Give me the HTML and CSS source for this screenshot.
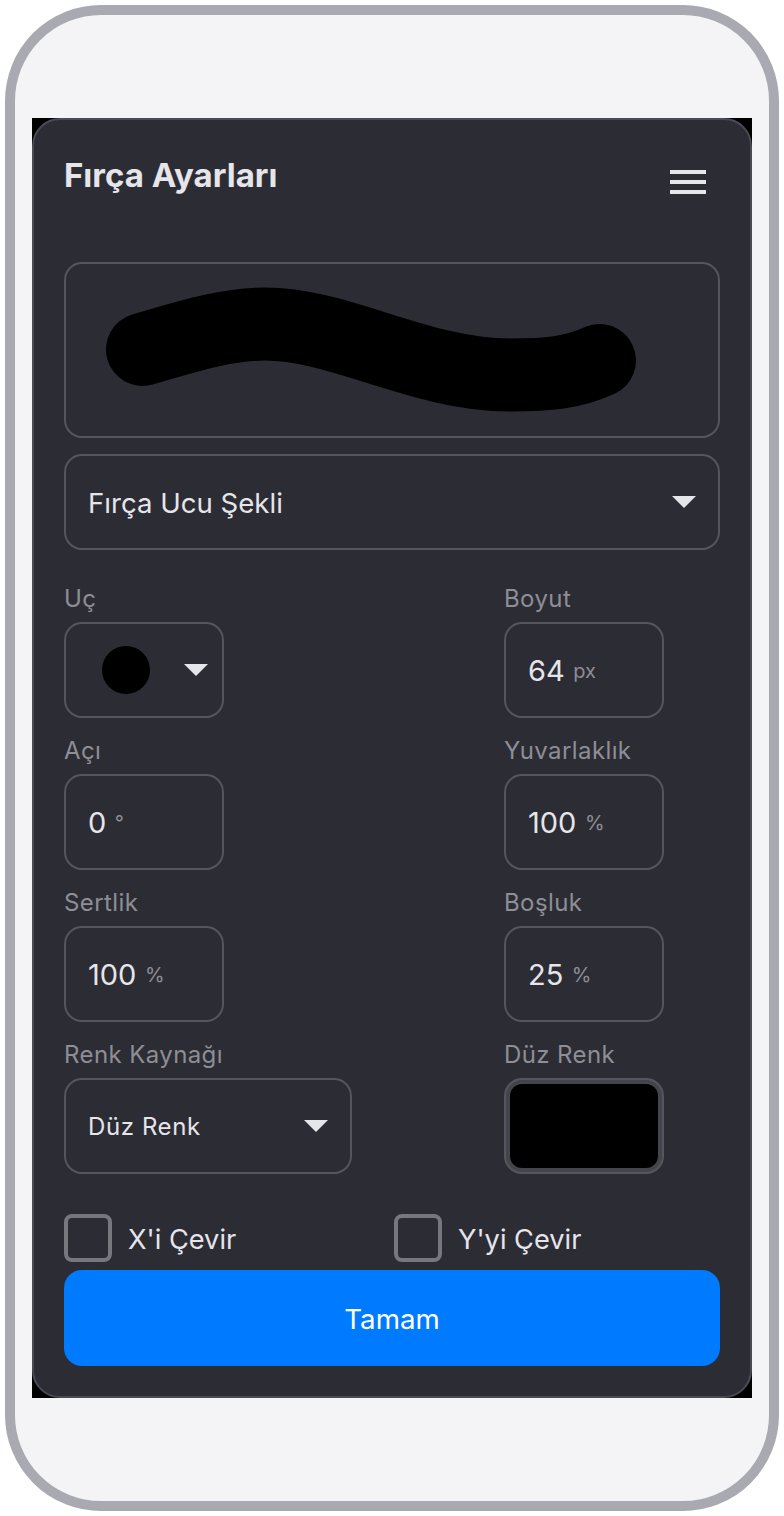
FILE: index.html
```html
<!DOCTYPE html>
<html lang="tr">
<head>
<meta charset="utf-8">
<title>Fırça Ayarları</title>
<link rel="stylesheet" href="styles.css">
</head>
<body>
<div class="phone">
  <div class="screen">
    <section class="modal">
      <header class="header">
        <h1 class="title">Fırça Ayarları</h1>
        <div class="menu"><span></span><span></span><span></span></div>
      </header>
      <div class="box preview">
        <svg class="stroke" viewBox="0 0 656 176" width="656" height="176">
          <path d="M78.500 87.500 C118 76 160 62 201 62 C276 62 356 113 446 113 C484 113 508 111 535.500 98.500" fill="none" stroke="#000" stroke-width="73" stroke-linecap="round"/>
        </svg>
      </div>
      <div class="box field select-wide"><span class="select-text">Fırça Ucu Şekli</span><i class="caret"></i></div>
      <div class="grid">
        <div class="cell">
          <div class="label">Uç</div>
          <div class="box field narrow tip"><span class="dot"></span><i class="caret"></i></div>
        </div>
        <div class="cell">
          <div class="label">Boyut</div>
          <div class="box field narrow"><span class="value">64</span><span class="unit">px</span></div>
        </div>
        <div class="cell">
          <div class="label">Açı</div>
          <div class="box field narrow"><span class="value">0</span><span class="unit">°</span></div>
        </div>
        <div class="cell">
          <div class="label">Yuvarlaklık</div>
          <div class="box field narrow"><span class="value">100</span><span class="unit">%</span></div>
        </div>
        <div class="cell">
          <div class="label">Sertlik</div>
          <div class="box field narrow"><span class="value">100</span><span class="unit">%</span></div>
        </div>
        <div class="cell">
          <div class="label">Boşluk</div>
          <div class="box field narrow"><span class="value">25</span><span class="unit">%</span></div>
        </div>
        <div class="cell">
          <div class="label">Renk Kaynağı</div>
          <div class="box field source"><span class="source-text">Düz Renk</span><i class="caret"></i></div>
        </div>
        <div class="cell">
          <div class="label">Düz Renk</div>
          <div class="box narrow swatch"><span class="swatch-fill"></span></div>
        </div>
      </div>
      <div class="checks">
        <label class="check"><span class="checkbox"></span><span class="check-text">X'i Çevir</span></label>
        <label class="check"><span class="checkbox"></span><span class="check-text">Y'yi Çevir</span></label>
      </div>
      <button class="ok" type="button">Tamam</button>
    </section>
  </div>
</div>
</body>
</html>
```
FILE: styles.css
```css
* { box-sizing: border-box; }
html, body { margin: 0; padding: 0; background: #fff; }
body { font-family: Inter, "Noto Sans", sans-serif; }
.phone {
  width: 774px; height: 1506px; margin: 5px;
  border: 10px solid #a9a9b2; border-radius: 96px;
  background: #f4f4f7;
  padding: 103px 17px 0;
}
.screen { width: 720px; height: 1280px; background: #000; }
.modal {
  height: 1280px; background: #2c2c34;
  border: 2px solid #4a4a55; border-radius: 28px;
  padding: 30px;
}
.header { display: flex; justify-content: space-between; align-items: flex-start; height: 112px; }
.title { margin: 0; font-size: 33px; line-height: 50px; font-weight: 700; color: #e5e5ea; }
.menu { display: flex; flex-direction: column; gap: 6px; width: 36px; margin: 20px 14px 0 0; }
.menu span { display: block; height: 4px; background: #e5e5ea; }
.box { border: 2px solid #55555e; border-radius: 18px; }
.preview { height: 176px; margin-bottom: 16px; }
.stroke { display: block; margin: -2px; }
.field { display: flex; align-items: center; height: 96px; padding: 0 22px; color: #e5e5ea; }
.select-wide { justify-content: space-between; }
.select-text { font-size: 27.6px; padding-top: 2px; }
.caret { width: 0; height: 0; border-left: 12px solid transparent; border-right: 12px solid transparent; border-top: 12px solid #e5e5ea; }
.grid { display: grid; grid-template-columns: 440px 1fr; row-gap: 16px; margin-top: 32px; }
.label { font-size: 24px; line-height: 34px; margin-bottom: 6px; letter-spacing: 0.4px; color: #8e8e96; }
.narrow { width: 160px; }
.tip { padding: 0 14px 0 36px; justify-content: space-between; }
.dot { width: 48px; height: 48px; border-radius: 50%; background: #000; }
.value { font-size: 29px; }
.unit { font-size: 20px; margin: 2px 0 0 8.5px; color: #8e8e96; }
.source { width: 288px; justify-content: space-between; }
.source-text { font-size: 24px; letter-spacing: 0.6px; }
.swatch { height: 96px; padding: 4px; background: #44444c; }
.swatch-fill { display: block; height: 100%; background: #000; border-radius: 12px; }
.checks { display: flex; gap: 0; margin-top: 40px; }
.check { display: flex; align-items: center; gap: 16px; flex: 0 0 330px; }
.checkbox { width: 48px; height: 48px; border: 4px solid #77777d; border-radius: 8px; }
.check-text { font-size: 27.2px; padding-top: 2px; color: #e5e5ea; }
.ok {
  display: block; width: 656px; height: 96px; margin-top: 8px; padding: 2px 0 0;
  background: #007aff; border: 0; border-radius: 18px;
  color: #fff; font: 400 27.7px Inter, sans-serif;
}
```
